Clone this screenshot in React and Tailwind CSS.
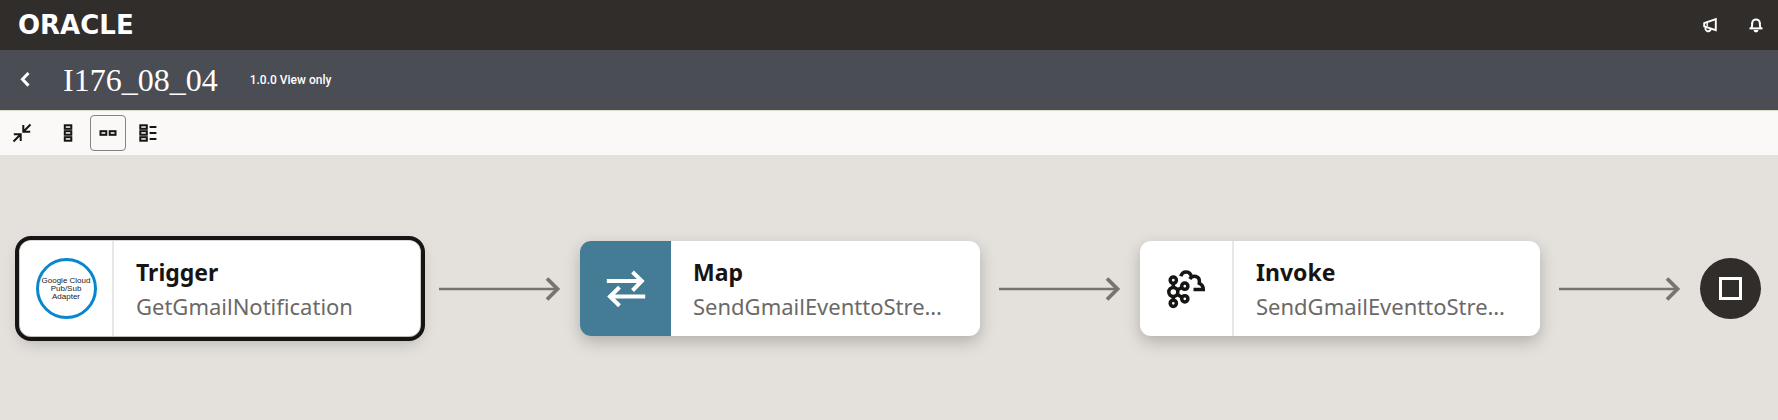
import React from "react";

function IconButton({ label, className = "", children, ...rest }) {
  return (
    <button type="button" aria-label={label} className={`flex size-9 items-center justify-center rounded ${className}`} {...rest}>
      {children}
    </button>
  );
}

function MegaphoneIcon() {
  return (
    <svg width="16" height="16" viewBox="0 0 16 16" fill="none" stroke="currentColor" strokeWidth="1.9">
      <path d="M2.200 6.200 13.800 2v11.200L2.200 9.400z" />
      <path d="M5.200 6v3.500" strokeWidth="1.400" />
      <path d="M3.800 10.200a2.700 2.700 0 1 0 5 1.800" />
    </svg>
  );
}

function BellIcon() {
  return (
    <svg width="16" height="16" viewBox="0 0 16 16" fill="none" stroke="currentColor" strokeWidth="2">
      <path d="M3.400 11.400C4.200 9.800 4 8.400 4.200 6.200a3.800 3.800 0 0 1 7.600 0c.2 2.200 0 3.600.8 5.200" />
      <path d="M1.500 11.400h13" />
      <path d="M5.600 13a2.400 2.400 0 0 0 4.800 0z" fill="currentColor" stroke="none" />
    </svg>
  );
}

function CollapseIcon() {
  return (
    <svg width="20" height="20" viewBox="0 0 20 20" fill="none" stroke="currentColor" strokeWidth="2">
      <path d="M18.500 1.500 11.500 8.500M11.300 2v6.800h6.900" />
      <path d="M1.500 18.500 8.500 11.500M1.800 11.200h6.900v6.800" />
    </svg>
  );
}

function VerticalIcon() {
  return (
    <svg width="20" height="20" viewBox="0 0 20 20" fill="none" stroke="currentColor" strokeWidth="2">
      <rect x="6.800" y="2.300" width="6.500" height="3.500" />
      <rect x="6.800" y="8.200" width="6.500" height="3.500" />
      <rect x="6.800" y="14.200" width="6.500" height="3.500" />
    </svg>
  );
}

function HorizontalIcon() {
  return (
    <svg width="20" height="20" viewBox="0 0 20 20" fill="none" stroke="currentColor" strokeWidth="2">
      <rect x="2.500" y="8.200" width="5.800" height="3.600" />
      <rect x="11.700" y="8.200" width="5.800" height="3.600" />
    </svg>
  );
}

function ListIcon() {
  return (
    <svg width="20" height="20" viewBox="0 0 20 20" fill="none" stroke="currentColor" strokeWidth="2">
      <rect x="2.300" y="2.300" width="6.500" height="3.500" />
      <rect x="2.300" y="8.200" width="6.500" height="3.500" />
      <rect x="2.300" y="14.200" width="6.500" height="3.500" />
      <path d="M11.600 4h6.800M11.600 10h6.800M11.600 16h6.800" />
    </svg>
  );
}

function MapIcon() {
  return (
    <svg width="40" height="40" viewBox="0 0 40 40" fill="none" stroke="white" strokeWidth="4">
      <path d="M.8 12h36M26.500 3l9.300 9-9.300 9.500" />
      <path d="M39.200 27.500h-36M13.500 18.300l-9.500 9.200 9.500 9.300" />
    </svg>
  );
}

function StreamingIcon() {
  return (
    <svg width="40" height="40" viewBox="0 0 40 40" fill="none" stroke="#161513" strokeWidth="3.500">
      <circle cx="7.300" cy="23" r="4.500" />
      <circle cx="7.300" cy="11.200" r="3.100" />
      <circle cx="7.300" cy="34.300" r="3.100" />
      <circle cx="18.800" cy="17.200" r="3.100" />
      <circle cx="18.800" cy="29.800" r="3.100" />
      <path d="M7.300 14v5M7.300 27v5M11 21l5-2.500M11 25.300l5 3" />
      <path d="M14.800 7.300C16.500 1.500 24.500 1 25.700 8.800M23.800 10C26.500 5.500 34.500 6.500 33.300 14.300C36 15.300 37.300 17.500 37.300 20.500H27.500" />
    </svg>
  );
}

function Connector() {
  return (
    <svg className="w-[122px] shrink-0" height="24" viewBox="0 0 122 24" fill="none" stroke="#78736e" aria-hidden="true">
      <path d="M0 12h119" strokeWidth="2.500" />
      <path d="M108 1.500 118.500 12 108 22.500" strokeWidth="3.800" />
    </svg>
  );
}

function AdapterBadge() {
  return (
    <div className="flex size-[61px] items-center justify-center rounded-full border-3 border-[#0a86cf] text-center font-['Liberation_Sans',sans-serif] text-[8px] leading-2 text-[#222]">
      <span className="whitespace-nowrap">
        Google Cloud
        <br />
        Pub/Sub
        <br />
        Adapter
      </span>
    </div>
  );
}

function FlowCard({ title, name, icon, selected, iconClass }) {
  return (
    <article
      className={`flex h-[95px] w-[400px] shrink-0 overflow-hidden rounded-[11px] bg-white shadow-[0_6px_16px_rgba(0,0,0,0.22)] ${
        selected ? "outline-4 outline-offset-1 outline-[#161513]" : ""
      }`}
    >
      <div className={`flex shrink-0 items-center justify-center ${iconClass}`}>{icon}</div>
      <div className="flex min-w-0 flex-1 flex-col justify-center px-[22px]">
        <h2 className="text-[23px] leading-[34px] font-bold text-[#161513]">{title}</h2>
        <p className="text-[22px] leading-[34px] whitespace-nowrap text-[#6b6967]">{name}</p>
      </div>
    </article>
  );
}

const plainCell = "w-[94px] border-r-2 border-[#e8e8e8]";

export default function App() {
  return (
    <div className="flex min-h-screen flex-col bg-[#e4e1dc] font-['Noto_Sans',sans-serif]">
      <header className="flex h-[50px] items-center justify-between bg-[#312d2a] pr-1 pl-[18px] text-white">
        <a href="#" className="font-['DejaVu_Sans',sans-serif] text-[26px] leading-[30px] font-bold">
          ORACLE
        </a>
        <div className="flex items-center gap-[10px]">
          <IconButton label="Announcements"><MegaphoneIcon /></IconButton>
          <IconButton label="Notifications"><BellIcon /></IconButton>
        </div>
      </header>

      <div className="flex h-[60px] items-center bg-[#4b4d55] pl-[7px] text-white">
        <IconButton label="Back">
          <svg width="16" height="20" viewBox="0 0 16 20" fill="none" stroke="currentColor" strokeWidth="3">
            <path d="M11.500 3 5.500 9.300l6 6.300" />
          </svg>
        </IconButton>
        <h1 className="ml-5 font-['Liberation_Serif',serif] text-[32px] leading-[40px]">I176_08_04</h1>
        <span className="ml-8 font-['Roboto',sans-serif] text-[12px] leading-4 font-medium">1.0.0 View only</span>
      </div>

      <div role="toolbar" aria-label="Canvas view" className="flex h-[45px] items-center border-t border-[#dcdccb] bg-[#faf9f8] pl-1 text-[#161513]">
        <IconButton label="Collapse"><CollapseIcon /></IconButton>
        <div className="ml-[10px] flex gap-1">
          <IconButton label="Vertical layout"><VerticalIcon /></IconButton>
          <IconButton label="Horizontal layout" aria-pressed="true" className="border border-[#85827f]"><HorizontalIcon /></IconButton>
          <IconButton label="List layout"><ListIcon /></IconButton>
        </div>
      </div>

      <main className="flex flex-1 items-start overflow-x-auto px-5 py-[86px]">
        <div className="flex items-center gap-[19px]">
          <FlowCard title="Trigger" name="GetGmailNotification" icon={<AdapterBadge />} iconClass={plainCell} selected />
          <Connector />
          <FlowCard title="Map" name="SendGmailEventtoStre…" icon={<MapIcon />} iconClass="w-[91px] bg-[#457c95]" />
          <Connector />
          <FlowCard title="Invoke" name="SendGmailEventtoStre…" icon={<StreamingIcon />} iconClass={plainCell} />
          <Connector />
          <div role="img" aria-label="Stop" className="flex size-[61px] shrink-0 items-center justify-center rounded-full bg-[#312d2a]">
            <div className="size-[23px] border-[3px] border-white" />
          </div>
        </div>
      </main>
    </div>
  );
}
